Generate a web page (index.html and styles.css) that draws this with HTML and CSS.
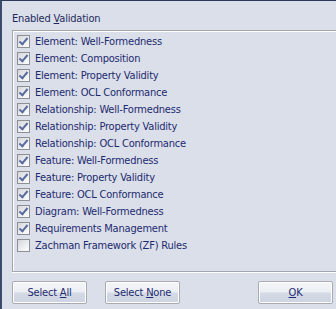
FILE: index.html
```html
<!DOCTYPE html>
<html>
<head>
<meta charset="utf-8">
<link rel="stylesheet" href="styles.css">
</head>
<body>
<div class="frame">
  <div class="caption">Enabled <u>V</u>alidation</div>
  <div class="listbox">
    <div class="row"><span class="cb on"></span><span class="lbl">Element: Well-Formedness</span></div>
    <div class="row"><span class="cb on"></span><span class="lbl">Element: Composition</span></div>
    <div class="row"><span class="cb on"></span><span class="lbl">Element: Property Validity</span></div>
    <div class="row"><span class="cb on"></span><span class="lbl">Element: OCL Conformance</span></div>
    <div class="row"><span class="cb on"></span><span class="lbl">Relationship: Well-Formedness</span></div>
    <div class="row"><span class="cb on"></span><span class="lbl">Relationship: Property Validity</span></div>
    <div class="row"><span class="cb on"></span><span class="lbl">Relationship: OCL Conformance</span></div>
    <div class="row"><span class="cb on"></span><span class="lbl">Feature: Well-Formedness</span></div>
    <div class="row"><span class="cb on"></span><span class="lbl">Feature: Property Validity</span></div>
    <div class="row"><span class="cb on"></span><span class="lbl">Feature: OCL Conformance</span></div>
    <div class="row"><span class="cb on"></span><span class="lbl">Diagram: Well-Formedness</span></div>
    <div class="row"><span class="cb on"></span><span class="lbl">Requirements Management</span></div>
    <div class="row"><span class="cb"></span><span class="lbl">Zachman Framework (ZF) Rules</span></div>
  </div>
  <div class="buttons">
    <button class="btn">Select <u>A</u>ll</button>
    <button class="btn">Select <u>N</u>one</button>
    <span class="spacer"></span>
    <button class="btn"><u>O</u>K</button>
  </div>
</div>
</body>
</html>
```
FILE: styles.css
```css
html, body {
  margin: 0;
  padding: 0;
  width: 336px;
  height: 309px;
  overflow: hidden;
  background: #dbdfe9;
}
.frame {
  box-sizing: border-box;
  height: 309px;
  border-top: 1px solid #2c3a5a;
  border-left: 2px solid #3a4a6e;
  padding: 0 0 0 10px;
  font-family: "DejaVu Sans Condensed", "Liberation Sans", Arial, sans-serif;
  font-size: 11px;
  letter-spacing: -0.2px;
  color: #1d2a70;
}
.caption {
  height: 29px;
  line-height: 14px;
  padding-top: 11px;
  box-sizing: border-box;
  color: #1f2b5e;
}
.listbox {
  box-sizing: border-box;
  width: 340px;
  height: 242px;
  border: 1px solid #a3a6ad;
  box-shadow: inset 1px 1px 0 #ffffff, 0 1px 0 #ffffff;
  padding: 2px 0 0 4px;
}
.row {
  display: flex;
  align-items: center;
  height: 17px;
}
.cb {
  box-sizing: border-box;
  width: 13px;
  height: 13px;
  border: 1px solid #8e8f94;
  background: linear-gradient(135deg, #d4d6db 0%, #f3f4f6 70%, #fbfbfc 100%);
  margin-right: 5px;
  position: relative;
  flex: none;
}
.cb.on::after {
  content: "";
  position: absolute;
  left: 3px;
  top: 0px;
  width: 3px;
  height: 7px;
  border-right: 2px solid #5a6ba0;
  border-bottom: 2px solid #5a6ba0;
  transform: rotate(40deg);
}
.lbl {
  white-space: nowrap;
  line-height: 14px;
}
.buttons {
  display: flex;
  margin-top: 9px;
  gap: 18px;
  width: 321px;
}
.spacer { flex: 1; }
.btn {
  box-sizing: border-box;
  width: 75px;
  height: 23px;
  border: 1px solid #a9abb2;
  border-radius: 2px;
  background: linear-gradient(to bottom, #f4f5f8 0%, #eceff4 45%, #d3d9e5 55%, #cdd3e0 100%);
  box-shadow: inset 0 0 0 1px #ffffff;
  font-family: "DejaVu Sans Condensed", "Liberation Sans", Arial, sans-serif;
  font-size: 11px;
  letter-spacing: -0.2px;
  color: #1d2a70;
  padding: 0;
  margin: 0;
  text-align: center;
}
```
